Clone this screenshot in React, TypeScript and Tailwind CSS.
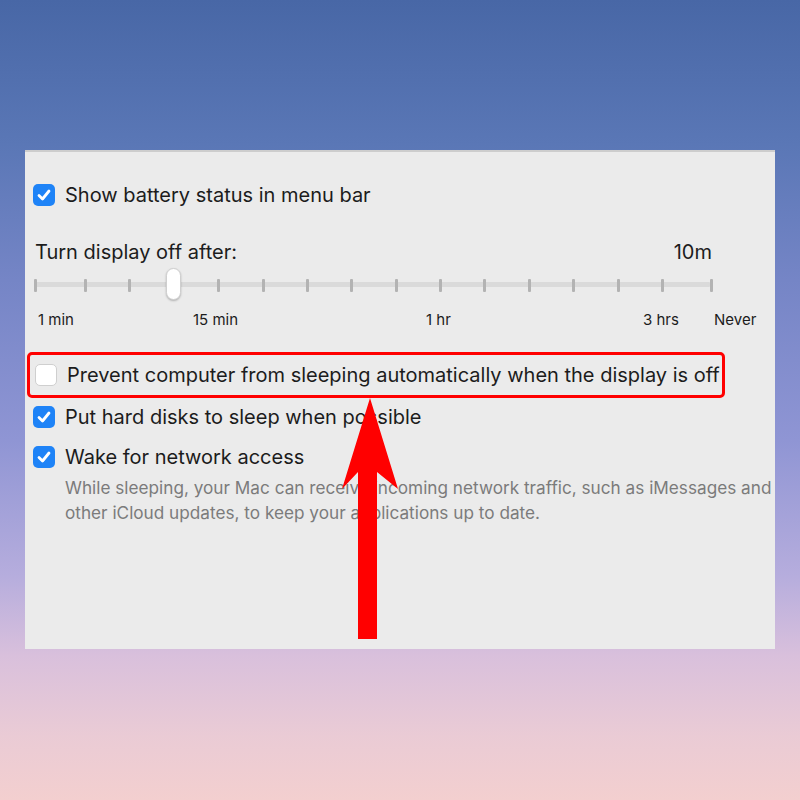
const INNER_TICKS = 14; // evenly spaced ticks between the first and last

function Check({ on }: { on: boolean }) {
  if (!on)
    return <span className="w-[22px] h-[22px] rounded-[5px] bg-white border border-[#cfcfcf] shrink-0" />;
  return (
    <span className="w-[22px] h-[22px] rounded-[5px] bg-[#1e83f7] flex items-center justify-center shrink-0">
      <svg width="16" height="16" viewBox="0 0 16 16" fill="none">
        <path d="M3 8.5 L6.5 12 L13 4" stroke="white" strokeWidth="2.8" strokeLinecap="round" strokeLinejoin="round" />
      </svg>
    </span>
  );
}

function Row({ on, label }: { on: boolean; label: string }) {
  return (
    <div className="flex items-center gap-[10px] h-[40px] pl-[8px]">
      <Check on={on} />
      <span className="text-[20px] text-[#1c1c1c]">{label}</span>
    </div>
  );
}

function Tick({ hidden }: { hidden?: boolean }) {
  return <span className={"w-[3px] h-[13px] rounded-[1px] " + (hidden ? "bg-transparent" : "bg-[#b3b3b3]")} />;
}

export default function App() {
  return (
    <div
      className="w-[800px] h-[800px] pt-[150px] pl-[25px] overflow-hidden"
      style={{
        fontFamily: "Inter, 'Liberation Sans', sans-serif",
        background:
          "linear-gradient(to bottom, #4867a6 0%, #5a77b6 18%, #7585c6 35%, #8f95d4 55%, #b6addd 72%, #d9c0dc 82%, #eacbd5 92%, #f3cfcf 100%)",
      }}
    >
      <div className="relative w-[750px] h-[499px] bg-[#ebebeb] border-t-2 border-[#cdcdcd] flex flex-col">
        {/* battery */}
        <div className="pt-[23px]">
          <Row on label="Show battery status in menu bar" />
        </div>

        {/* display off slider */}
        <div className="mt-[22px] pl-[10px] pr-[63px] flex justify-between items-center h-[30px] text-[20px] text-[#1c1c1c]">
          <span>Turn display off after:</span>
          <span>10m</span>
        </div>
        <div className="relative h-[40px] -mt-[2px] flex items-center pl-[9px]">
          <div className="absolute left-[10px] w-[676px] top-[17px] h-[5px] rounded-full bg-[#dadada]" />
          <div className="relative flex items-center">
            <Tick />
            <div className="w-[47px]" />
            <div className="w-[580px] flex justify-between">
              {Array.from({ length: INNER_TICKS }, (_, i) => (
                <Tick key={i} hidden={i === 2} />
              ))}
            </div>
            <div className="w-[46px]" />
            <Tick />
          </div>
          <div className="absolute left-[141px] top-[3px] w-[15px] h-[32px] rounded-full bg-white border border-[#cfcfcf] shadow-[0_1px_2px_rgba(0,0,0,0.25)]" />
        </div>
        <div className="grid grid-cols-[155px_233px_217px_71px_auto] pl-[13px] h-[30px] pt-[4px] text-[15px] text-[#1c1c1c]">
          <span>1 min</span>
          <span>15 min</span>
          <span>1 hr</span>
          <span>3 hrs</span>
          <span>Never</span>
        </div>

        {/* highlighted option */}
        <div className="mt-[17px] ml-[2px] w-[698px] h-[46px] border-[3.5px] border-[#ff0000] rounded-[5px] flex items-center gap-[10px] pl-[5px]">
          <Check on={false} />
          <span className="text-[20px] text-[#1c1c1c]">
            Prevent computer from sleeping automatically when the display is off
          </span>
        </div>

        <div className="-mt-[1px]">
          <Row on label="Put hard disks to sleep when possible" />
          <Row on label="Wake for network access" />
        </div>
        <p className="pl-[40px] -mt-[2px] text-[17.2px] leading-[25px] text-[#7b7b7b] whitespace-nowrap">
          While sleeping, your Mac can receive incoming network traffic, such as iMessages and
          <br />
          other iCloud updates, to keep your applications up to date.
        </p>

        {/* arrow overlay */}
        <svg className="absolute left-[315px] top-[246px]" width="60" height="245" viewBox="0 0 60 245">
          <path d="M30 0 L58 91 L37 74 L37 241 L18 241 L18 74 L2 91 Z" fill="#ff0000" />
        </svg>
      </div>
    </div>
  );
}
